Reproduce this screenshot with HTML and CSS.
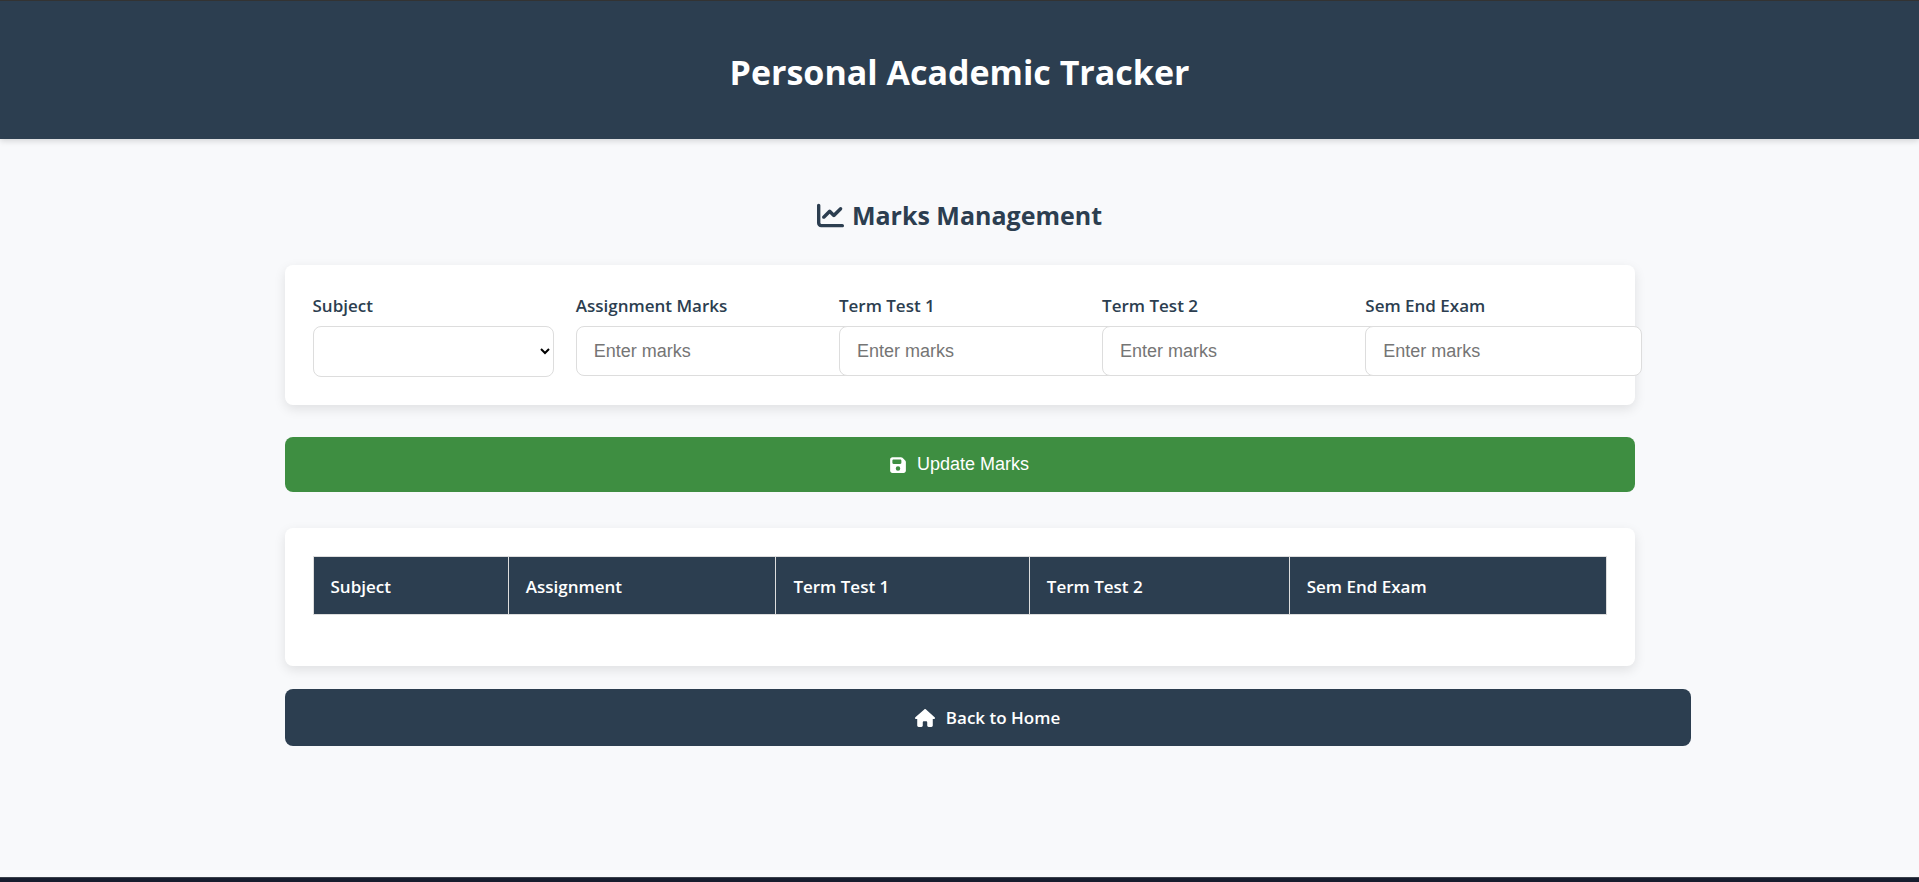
FILE: index.html
```html
<!DOCTYPE html>
<html lang="en">
<head>
<meta charset="utf-8">
<meta name="viewport" content="width=device-width, initial-scale=1">
<title>Personal Academic Tracker</title>
<link rel="stylesheet" href="styles.css">
</head>
<body>
<header class="site-header">
  <h1 class="site-title">Personal Academic Tracker</h1>
</header>
<main class="container">
  <h2 class="section-title">
    <svg class="icon-chart" viewBox="0 0 512 512" aria-hidden="true"><path d="M64 64c0-17.7-14.3-32-32-32S0 46.3 0 64V400c0 44.2 35.8 80 80 80H480c17.7 0 32-14.3 32-32s-14.3-32-32-32H80c-8.8 0-16-7.2-16-16V64zm406.6 86.6c12.5-12.5 12.5-32.8 0-45.3s-32.8-12.5-45.3 0L320 210.7l-57.4-57.4c-12.5-12.5-32.8-12.5-45.3 0l-112 112c-12.5 12.5-12.5 32.8 0 45.3s32.8 12.5 45.3 0L240 221.3l57.4 57.4c12.5 12.5 32.8 12.5 45.3 0l128-128z"/></svg>
    Marks Management
  </h2>
  <form class="marks-form">
    <div class="card form-grid">
      <div class="field">
        <label for="subject">Subject</label>
        <select id="subject" class="select"></select>
      </div>
      <div class="field">
        <label for="assignment">Assignment Marks</label>
        <input id="assignment" class="input" type="number" placeholder="Enter marks">
      </div>
      <div class="field">
        <label for="term1">Term Test 1</label>
        <input id="term1" class="input" type="number" placeholder="Enter marks">
      </div>
      <div class="field">
        <label for="term2">Term Test 2</label>
        <input id="term2" class="input" type="number" placeholder="Enter marks">
      </div>
      <div class="field">
        <label for="semend">Sem End Exam</label>
        <input id="semend" class="input" type="number" placeholder="Enter marks">
      </div>
    </div>
    <button class="update-button" type="button">
      <svg class="icon-save" viewBox="0 0 448 512" aria-hidden="true"><path d="M64 32C28.7 32 0 60.7 0 96V416c0 35.3 28.7 64 64 64H384c35.3 0 64-28.7 64-64V173.3c0-17-6.7-33.3-18.7-45.3L352 50.7C340 38.7 323.7 32 306.7 32H64zm0 96c0-17.7 14.3-32 32-32H288c17.7 0 32 14.3 32 32v64c0 17.7-14.3 32-32 32H96c-17.7 0-32-14.3-32-32V128zM224 288a64 64 0 1 1 0 128 64 64 0 1 1 0-128z"/></svg>
      Update Marks
    </button>
  </form>
  <section class="card table-card">
    <table class="marks-table">
      <colgroup>
        <col class="col-subject"><col class="col-assignment"><col class="col-term1"><col class="col-term2"><col>
      </colgroup>
      <thead>
        <tr>
          <th scope="col">Subject</th>
          <th scope="col">Assignment</th>
          <th scope="col">Term Test 1</th>
          <th scope="col">Term Test 2</th>
          <th scope="col">Sem End Exam</th>
        </tr>
      </thead>
    </table>
  </section>
  <a class="home-link" href="#">
    <svg class="icon-home" viewBox="0 0 576 512" aria-hidden="true"><path d="M575.8 255.5c0 18-15 32.1-32 32.1h-32l.7 160.2c0 2.7-.2 5.4-.5 8.1V472c0 22.1-17.9 40-40 40H456c-1.1 0-2.2 0-3.3-.1c-1.4 .1-2.8 .1-4.2 .1H416 392c-22.1 0-40-17.9-40-40V448 384c0-17.7-14.3-32-32-32H256c-17.7 0-32 14.3-32 32v64 24c0 22.1-17.9 40-40 40H160 128.1c-1.5 0-3-.1-4.5-.2c-1.2 .1-2.4 .2-3.6 .2H104c-22.1 0-40-17.9-40-40V360c0-.9 0-1.9 .1-2.8V287.6H32c-18 0-32-14-32-32.1c0-9 3-17 10-24L266.4 8c7-7 15-8 22-8s15 2 21 7L564.8 231.5c8 7 12 15 11 24z"/></svg>
    Back to Home
  </a>
</main>
<footer class="bottom-bar"></footer>
</body>
</html>
```
FILE: styles.css
```css
body {
  margin: 0;
  min-height: 100vh;
  display: flex;
  flex-direction: column;
  background: #f8f9fb;
  color: #2c3e50;
  font-family: "Segoe UI", "Open Sans", "Noto Sans", sans-serif;
  font-size: 17px;
  line-height: 26px;
}

svg {
  fill: currentColor;
  flex: none;
}

.site-header {
  padding: 42px 20px 38px;
  border-top: 1px solid #333333;
  background: #2c3e50;
  color: #ffffff;
  text-align: center;
  box-shadow: 0 2px 6px rgba(0, 0, 0, 0.15);
}

.site-title {
  margin: 0;
  font-size: 34px;
  line-height: 58px;
  font-weight: 700;
}

.container {
  flex: 1;
  width: 100%;
  max-width: 1350px;
  margin: 0 auto;
  padding-top: 53px;
}

.section-title {
  display: flex;
  justify-content: center;
  align-items: center;
  gap: 8px;
  margin: 0 0 27px;
  font-size: 25px;
  line-height: 46px;
  font-weight: 700;
}

.icon-chart {
  width: 27px;
  height: 27px;
}

.card {
  padding: 28px;
  border-radius: 8px;
  background: #ffffff;
  box-shadow: 0 4px 12px rgba(0, 0, 0, 0.1);
}

.form-grid {
  display: grid;
  grid-template-columns: repeat(5, minmax(0, 1fr));
  gap: 22px;
}

.field label {
  display: block;
  margin-bottom: 7px;
  font-weight: 600;
}

.select,
.input {
  display: block;
  width: 100%;
  border: 1px solid #dddddd;
  border-radius: 8px;
  background: #ffffff;
  font-family: "Liberation Sans", Arial, sans-serif;
  font-size: 18px;
}

.select {
  box-sizing: border-box;
  height: 51px;
  padding: 14px 8px;
}

.input {
  box-sizing: content-box;
  height: 20px;
  padding: 14px 17px;
}

.update-button {
  display: flex;
  justify-content: center;
  align-items: center;
  gap: 11px;
  width: 100%;
  margin: 32px 0 36px;
  padding: 17px;
  border: 0;
  border-radius: 8px;
  background: #3e8e41;
  color: #ffffff;
  font-family: "Liberation Sans", Arial, sans-serif;
  font-size: 18px;
  line-height: 21px;
}

.icon-save {
  width: 16px;
  height: 18px;
}

.marks-table {
  width: 100%;
  margin-bottom: 23px;
  border-collapse: collapse;
  table-layout: fixed;
}

.marks-table th {
  padding: 15px 17px 13px;
  border: 1px solid #dddddd;
  background: #2c3e50;
  color: #ffffff;
  font-weight: 600;
  line-height: 29px;
  text-align: left;
}

.col-subject { width: 15.1%; }
.col-assignment { width: 20.7%; }
.col-term1 { width: 19.6%; }
.col-term2 { width: 20.1%; }

.home-link {
  display: flex;
  justify-content: center;
  align-items: center;
  gap: 11px;
  width: 100%;
  margin-top: 23px;
  padding: 14px 28px;
  border-radius: 8px;
  background: #2c3e50;
  color: #ffffff;
  font-weight: 600;
  line-height: 29px;
  text-decoration: none;
}

.icon-home {
  width: 20px;
  height: 18px;
}

.bottom-bar {
  height: 4px;
  border-top: 1px solid #3b424c;
  background: #161d2e;
}
```
